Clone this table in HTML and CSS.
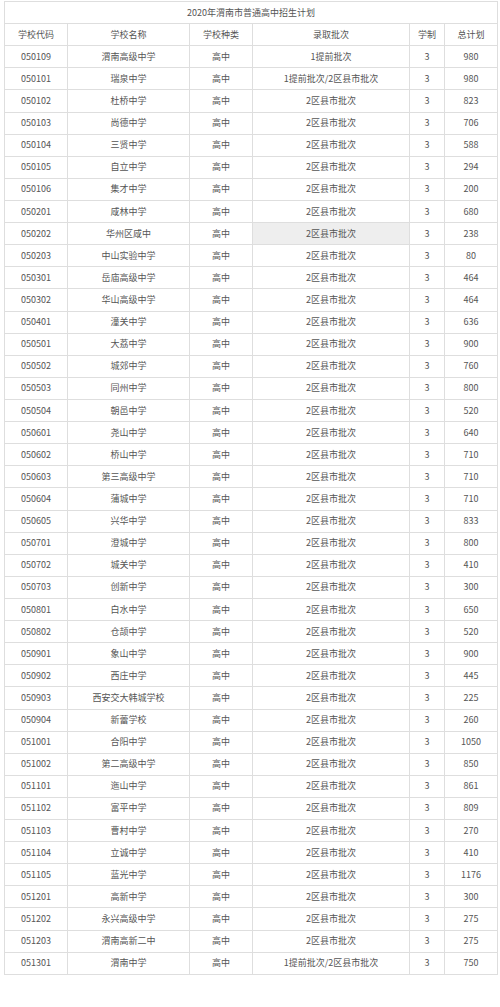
FILE: index.html
```html
<!DOCTYPE html>
<html lang="zh-CN">
<head>
<meta charset="utf-8">
<title>2020年渭南市普通高中招生计划</title>
<link rel="stylesheet" href="styles.css">
</head>
<body>
<table class="plan">
<colgroup>
<col class="c-code"><col class="c-name"><col class="c-type"><col class="c-batch"><col class="c-years"><col class="c-total">
</colgroup>
<thead>
<tr><th colspan="6" class="title">2020年渭南市普通高中招生计划</th></tr>
<tr><th>学校代码</th><th>学校名称</th><th>学校种类</th><th>录取批次</th><th>学制</th><th>总计划</th></tr>
</thead>
<tbody>
<tr><td>050109</td><td>渭南高级中学</td><td>高中</td><td>1提前批次</td><td>3</td><td>980</td></tr>
<tr><td>050101</td><td>瑞泉中学</td><td>高中</td><td>1提前批次/2区县市批次</td><td>3</td><td>980</td></tr>
<tr><td>050102</td><td>杜桥中学</td><td>高中</td><td>2区县市批次</td><td>3</td><td>823</td></tr>
<tr><td>050103</td><td>尚德中学</td><td>高中</td><td>2区县市批次</td><td>3</td><td>706</td></tr>
<tr><td>050104</td><td>三贤中学</td><td>高中</td><td>2区县市批次</td><td>3</td><td>588</td></tr>
<tr><td>050105</td><td>自立中学</td><td>高中</td><td>2区县市批次</td><td>3</td><td>294</td></tr>
<tr><td>050106</td><td>集才中学</td><td>高中</td><td>2区县市批次</td><td>3</td><td>200</td></tr>
<tr><td>050201</td><td>咸林中学</td><td>高中</td><td>2区县市批次</td><td>3</td><td>680</td></tr>
<tr><td>050202</td><td>华州区咸中</td><td>高中</td><td class="hl">2区县市批次</td><td>3</td><td>238</td></tr>
<tr><td>050203</td><td>中山实验中学</td><td>高中</td><td>2区县市批次</td><td>3</td><td>80</td></tr>
<tr><td>050301</td><td>岳庙高级中学</td><td>高中</td><td>2区县市批次</td><td>3</td><td>464</td></tr>
<tr><td>050302</td><td>华山高级中学</td><td>高中</td><td>2区县市批次</td><td>3</td><td>464</td></tr>
<tr><td>050401</td><td>潼关中学</td><td>高中</td><td>2区县市批次</td><td>3</td><td>636</td></tr>
<tr><td>050501</td><td>大荔中学</td><td>高中</td><td>2区县市批次</td><td>3</td><td>900</td></tr>
<tr><td>050502</td><td>城郊中学</td><td>高中</td><td>2区县市批次</td><td>3</td><td>760</td></tr>
<tr><td>050503</td><td>同州中学</td><td>高中</td><td>2区县市批次</td><td>3</td><td>800</td></tr>
<tr><td>050504</td><td>朝邑中学</td><td>高中</td><td>2区县市批次</td><td>3</td><td>520</td></tr>
<tr><td>050601</td><td>尧山中学</td><td>高中</td><td>2区县市批次</td><td>3</td><td>640</td></tr>
<tr><td>050602</td><td>桥山中学</td><td>高中</td><td>2区县市批次</td><td>3</td><td>710</td></tr>
<tr><td>050603</td><td>第三高级中学</td><td>高中</td><td>2区县市批次</td><td>3</td><td>710</td></tr>
<tr><td>050604</td><td>蒲城中学</td><td>高中</td><td>2区县市批次</td><td>3</td><td>710</td></tr>
<tr><td>050605</td><td>兴华中学</td><td>高中</td><td>2区县市批次</td><td>3</td><td>833</td></tr>
<tr><td>050701</td><td>澄城中学</td><td>高中</td><td>2区县市批次</td><td>3</td><td>800</td></tr>
<tr><td>050702</td><td>城关中学</td><td>高中</td><td>2区县市批次</td><td>3</td><td>410</td></tr>
<tr><td>050703</td><td>创新中学</td><td>高中</td><td>2区县市批次</td><td>3</td><td>300</td></tr>
<tr><td>050801</td><td>白水中学</td><td>高中</td><td>2区县市批次</td><td>3</td><td>650</td></tr>
<tr><td>050802</td><td>仓颉中学</td><td>高中</td><td>2区县市批次</td><td>3</td><td>520</td></tr>
<tr><td>050901</td><td>象山中学</td><td>高中</td><td>2区县市批次</td><td>3</td><td>900</td></tr>
<tr><td>050902</td><td>西庄中学</td><td>高中</td><td>2区县市批次</td><td>3</td><td>445</td></tr>
<tr><td>050903</td><td>西安交大韩城学校</td><td>高中</td><td>2区县市批次</td><td>3</td><td>225</td></tr>
<tr><td>050904</td><td>新蕾学校</td><td>高中</td><td>2区县市批次</td><td>3</td><td>260</td></tr>
<tr><td>051001</td><td>合阳中学</td><td>高中</td><td>2区县市批次</td><td>3</td><td>1050</td></tr>
<tr><td>051002</td><td>第二高级中学</td><td>高中</td><td>2区县市批次</td><td>3</td><td>850</td></tr>
<tr><td>051101</td><td>迤山中学</td><td>高中</td><td>2区县市批次</td><td>3</td><td>861</td></tr>
<tr><td>051102</td><td>富平中学</td><td>高中</td><td>2区县市批次</td><td>3</td><td>809</td></tr>
<tr><td>051103</td><td>曹村中学</td><td>高中</td><td>2区县市批次</td><td>3</td><td>270</td></tr>
<tr><td>051104</td><td>立诚中学</td><td>高中</td><td>2区县市批次</td><td>3</td><td>410</td></tr>
<tr><td>051105</td><td>蓝光中学</td><td>高中</td><td>2区县市批次</td><td>3</td><td>1176</td></tr>
<tr><td>051201</td><td>高新中学</td><td>高中</td><td>2区县市批次</td><td>3</td><td>300</td></tr>
<tr><td>051202</td><td>永兴高级中学</td><td>高中</td><td>2区县市批次</td><td>3</td><td>275</td></tr>
<tr><td>051203</td><td>渭南高新二中</td><td>高中</td><td>2区县市批次</td><td>3</td><td>275</td></tr>
<tr><td>051301</td><td>渭南中学</td><td>高中</td><td>1提前批次/2区县市批次</td><td>3</td><td>750</td></tr>
</tbody>
</table>
</body>
</html>
```
FILE: styles.css
```css
html, body {
  margin: 0;
  padding: 0;
  background: #ffffff;
}

body {
  padding: 1px 0 0 4px;
  font-family: "Noto Sans CJK SC", "Noto Sans", sans-serif;
  font-size: 9px;
  color: #555555;
}

.plan {
  border-collapse: collapse;
  table-layout: fixed;
  width: 493px;
}

.c-code { width: 63px; }
.c-name { width: 122px; }
.c-type { width: 63px; }
.c-batch { width: 157px; }
.c-years { width: 35px; }
.c-total { width: 53px; }

.plan th,
.plan td {
  border: 1px solid #dedede;
  padding: 0;
  height: 21.11px;
  line-height: 12px;
  text-align: center;
  vertical-align: middle;
  font-weight: normal;
  white-space: nowrap;
}

.plan tr {
  height: 22.11px;
}

.plan .hl {
  background: #eeeeee;
}
```
